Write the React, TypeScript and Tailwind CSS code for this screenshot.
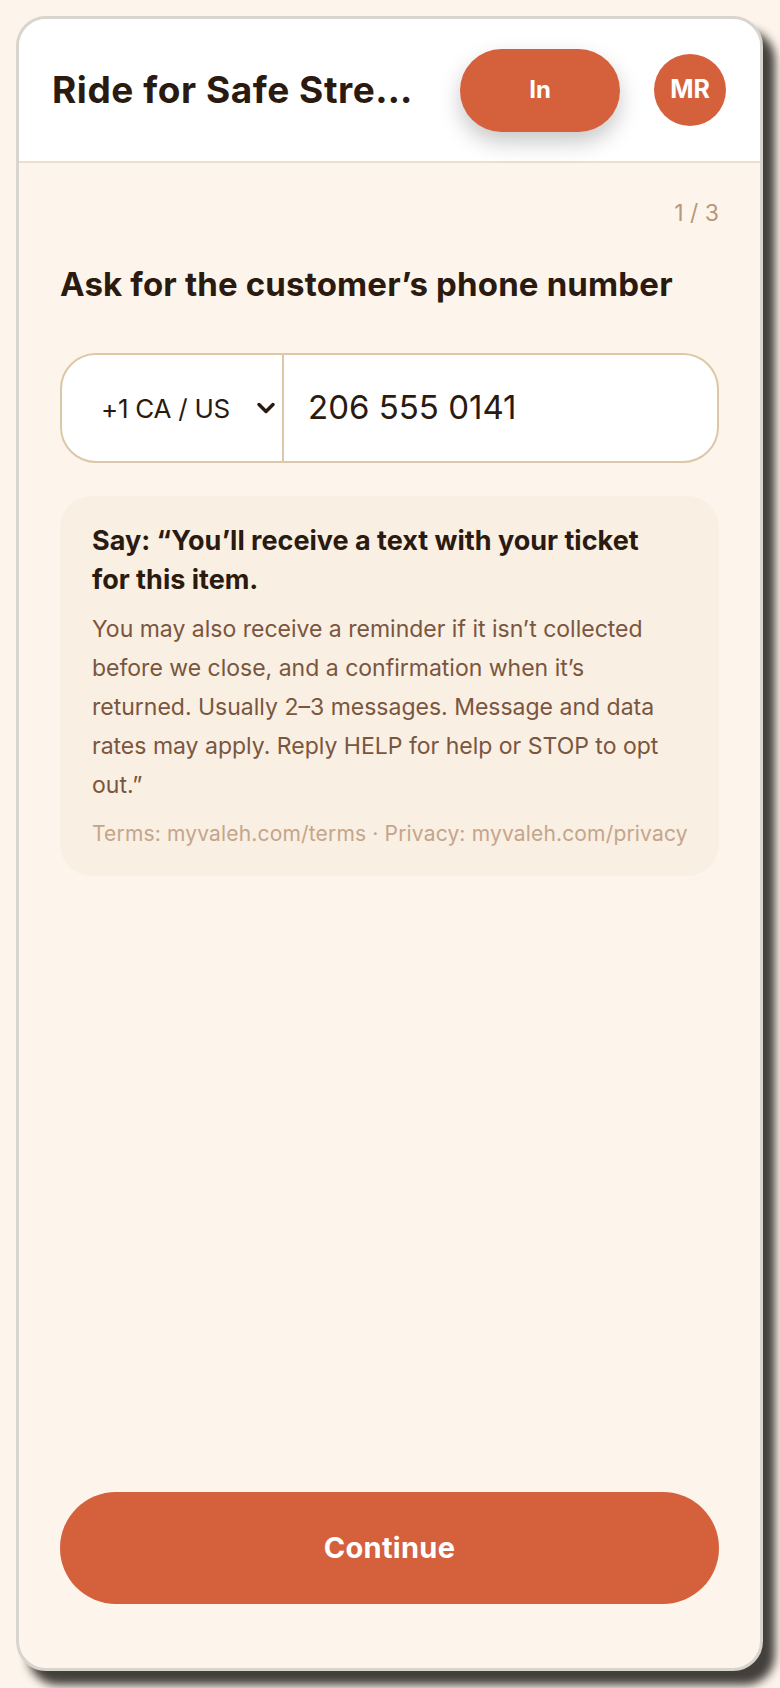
import { ChevronDown } from 'lucide-react'

const FONT = { fontFamily: 'Inter, "Noto Sans", sans-serif' }

function Header() {
  return (
    <div className="flex h-[144px] shrink-0 items-center justify-between border-b-2 border-[#ecdfcc] bg-white pl-[33px] pr-[34px]">
      <div className="min-w-0 flex-1 whitespace-nowrap text-[37px] font-bold tracking-[0.015em] text-[#2a1a10]">
        Ride for Safe Stre…
      </div>
      <div className="flex items-center gap-[34px]">
        <button className="flex h-[83px] w-[160px] items-center justify-center rounded-full bg-[#d5613c] text-[24px] font-bold text-white shadow-[0_10px_22px_rgba(0,0,0,0.22)]">
          In
        </button>
        <div className="flex h-[72px] w-[72px] items-center justify-center rounded-full bg-[#d5613c] text-[25px] font-bold text-white">
          MR
        </div>
      </div>
    </div>
  )
}

function PhoneInput() {
  return (
    <div className="mt-[49px] flex h-[110px] overflow-hidden rounded-[36px] border-2 border-[#dcc7a6] bg-white">
      <div className="flex w-[222px] shrink-0 items-center border-r-2 border-[#dcc7a6] pl-[39px] pr-[2px] text-[#2a1a10]">
        <span className="flex-1 text-[26px] tracking-[-0.01em]">+1 CA / US</span>
        <ChevronDown size={28} strokeWidth={3} />
      </div>
      <div className="flex flex-1 items-center pl-[24px] text-[33px] text-[#2a1a10]">206 555 0141</div>
    </div>
  )
}

function Disclosure() {
  return (
    <div className="mt-[33px] rounded-[32px] bg-[#f9efe2] pb-[26px] pl-[32px] pr-[44px] pt-[25px]">
      <div className="text-[27px] font-bold leading-[39px] text-[#2a1a10]">
        Say: “You’ll receive a text with your ticket for this item.
      </div>
      <p className="mt-[11px] text-[23px] leading-[39px] text-[#7a5640]">
        You may also receive a reminder if it isn’t collected before we close, and a confirmation when it’s
        returned. Usually 2–3 messages. Message and data rates may apply. Reply HELP for help or STOP to opt
        out.”
      </p>
      <div className="mt-[13px] whitespace-nowrap text-[21px] leading-[32px] tracking-[0.008em] text-[#c4a58c]">
        Terms: myvaleh.com/terms · Privacy: myvaleh.com/privacy
      </div>
    </div>
  )
}

export default function App() {
  return (
    <div className="min-h-[1688px] w-[780px] bg-[#fdf5eb] pl-[16px] pt-[16px]" style={FONT}>
      <div className="flex h-[1655px] w-[747px] flex-col overflow-hidden rounded-[30px] border-[3px] border-[#d8d4ce] bg-[#fdf5eb] shadow-[12px_14px_10px_rgba(20,18,15,0.8)]">
        <Header />
        <div className="flex flex-1 flex-col px-[41px] pb-[64px]">
          <div className="mt-[35px] text-right text-[23px] leading-[30px] text-[#b8977c]">1 / 3</div>
          <h1 className="mt-[36px] text-[33px] font-bold leading-[40px] tracking-[0.005em] text-[#2a1a10]">
            Ask for the customer’s phone number
          </h1>
          <PhoneInput />
          <Disclosure />
          <button className="mt-auto flex h-[112px] w-full items-center justify-center rounded-full bg-[#d5613c] text-[29px] font-bold tracking-[0.01em] text-white">
            Continue
          </button>
        </div>
      </div>
    </div>
  )
}
